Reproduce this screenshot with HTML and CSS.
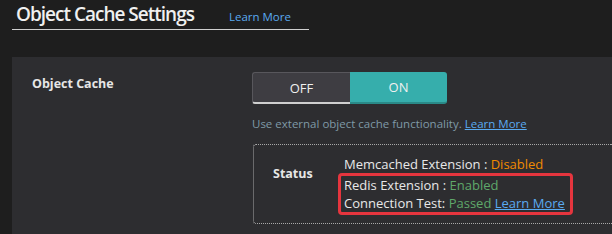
FILE: index.html
```html
<!DOCTYPE html>
<html>
<head>
<meta charset="utf-8">
<link rel="stylesheet" href="styles.css">
</head>
<body>
<div class="header">
  <div class="title-bar">
    <h1 class="title">Object Cache Settings</h1>
    <a class="title-link">Learn More</a>
  </div>
</div>
<div class="panel">
  <div class="row">
    <div class="label">Object Cache</div>
    <div class="control">
      <div class="toggle">
        <div class="toggle-off">OFF</div>
        <div class="toggle-on">ON</div>
      </div>
      <div class="desc">Use external object cache functionality. <a class="link">Learn More</a></div>
      <div class="status-box">
        <div class="status-label">Status</div>
        <div class="status-lines">
          <div class="line">Memcached Extension : <span class="disabled">Disabled</span></div>
          <div class="highlight">
            <div class="line">Redis Extension : <span class="enabled">Enabled</span></div>
            <div class="line">Connection Test: <span class="enabled">Passed</span> <a class="link">Learn More</a></div>
          </div>
        </div>
      </div>
    </div>
  </div>
</div>
</body>
</html>
```
FILE: styles.css
```css
* { box-sizing: border-box; }
html, body { margin: 0; padding: 0; }
body {
  background: #1e1e1e;
  font-family: "Open Sans", "Noto Sans", sans-serif;
  color: #e8e8e8;
  width: 612px;
  height: 234px;
  overflow: hidden;
  white-space: nowrap;
}
.header { padding: 2px 0 0 12px; }
.title-bar {
  width: 297px;
  height: 28px;
  display: flex;
  align-items: baseline;
  border-bottom: 1px solid #d0d0d0;
  padding: 0 0 0 4px;
}
.title {
  margin: 0;
  font-size: 19px;
  line-height: 24px;
  font-weight: 600;
  color: #f0f0f0;
  letter-spacing: -1px;
  flex-shrink: 0;
}
.title-link {
  margin-left: 35px;
  font-size: 11.5px;
  color: #5aaaf0;
  flex-shrink: 0;
}
.panel {
  margin: 27px 0 0 12px;
  background: #2d2d30;
  padding: 15px 0 0 20px;
  height: 177px;
}
.row { display: flex; }
.label {
  width: 220px;
  font-size: 12.5px;
  font-weight: 700;
  color: #e6e6e6;
  padding-top: 3px;
}
.control { flex: 1; }
.toggle {
  display: flex;
  width: 195px;
  height: 32px;
}
.toggle-off, .toggle-on {
  flex: 1;
  display: flex;
  align-items: center;
  justify-content: center;
  font-size: 13px;
  color: #f0f0f0;
}
.toggle-off {
  background: #3e3d42;
  border: 1px solid #58575c;
  border-bottom: 2px solid #cfcfcf;
  border-right: none;
  border-radius: 3px 0 0 3px;
}
.toggle-on {
  background: #36aeac;
  border-bottom: 2px solid #2a8a88;
  border-radius: 0 3px 3px 0;
}
.desc {
  margin-top: 12px;
  font-size: 11.5px;
  line-height: 16px;
  color: #7f99a6;
}
.link {
  color: #5aaaf0;
  text-decoration: underline;
}
.status-box {
  margin-top: 12px;
  margin-left: 1px;
  border: 1px dotted #a8a8a8;
  border-right: none;
  border-radius: 3px 0 0 3px;
  display: flex;
  align-items: flex-start;
  height: 80px;
  padding: 10px 0 0 19px;
}
.status-label {
  width: 71px;
  font-size: 12.5px;
  line-height: 18px;
  font-weight: 700;
  color: #e6e6e6;
  margin-top: 10px;
}
.status-lines {
  font-size: 13px;
  line-height: 18px;
  color: #e8e8e8;
}
.highlight {
  border: 3px solid #e5353e;
  border-radius: 4px;
  margin-left: -6px;
  padding: 0 3px;
  width: 235px;
}
.line { height: 18px; }
.disabled { color: #f08a00; }
.enabled { color: #5fa86a; }
```
